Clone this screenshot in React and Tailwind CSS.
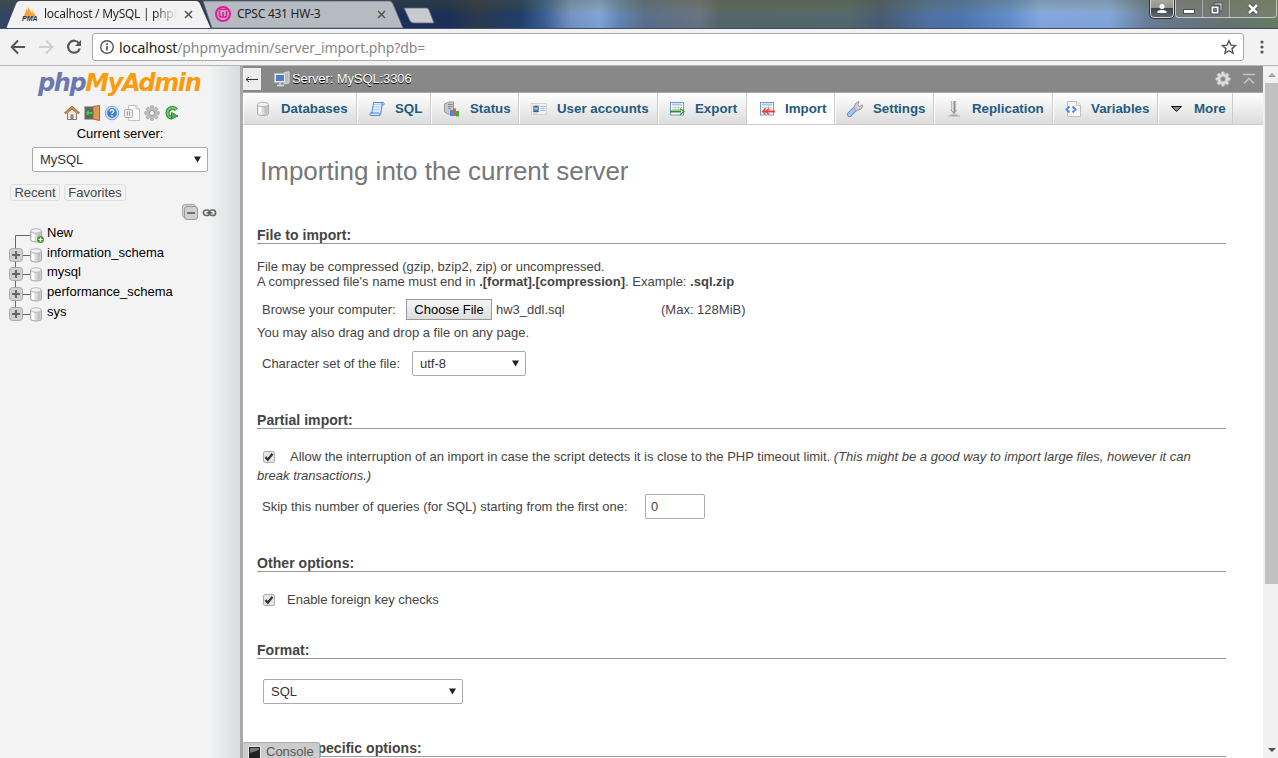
import React from "react";

const Svg = ({ w = 16, h = 16, className = "", children }) => (
  <svg width={w} height={h} viewBox={`0 0 ${w} ${h}`} className={"shrink-0 " + className} fill="none">
    {children}
  </svg>
);

const GearShape = ({ fill, stroke, hole }) => (
  <>
    {[0, 45, 90, 135].map((a) => (
      <rect key={a} x="6.4" y="0.7" width="3.2" height="14.6" rx="0.8" fill={fill} stroke={stroke} strokeWidth=".6" transform={`rotate(${a} 8 8)`} />
    ))}
    <circle cx="8" cy="8" r="5.3" fill={fill} />
    <circle cx="8" cy="8" r="2.6" fill={hole} stroke={stroke} />
  </>
);

const Cylinder = () => (
  <>
    <path d="M2.5 3.5v9c0 1.2 2.4 2 5.5 2s5.500-.8 5.500-2v-9" fill="#d9d9d9" stroke="#aaa" />
    <path d="M3.500 5v7.500c.8.6 1.800 1 3 1.100V6z" fill="#fff" />
    <path d="M9.500 6v7.600c1.500-.1 2.500-.5 3-1V5z" fill="#c2c2c2" />
    <ellipse cx="8" cy="3.500" rx="5.500" ry="2.200" fill="#f2f2f2" stroke="#b5b5b5" />
  </>
);

const DbIcon = () => <Svg><Cylinder /></Svg>;

const SqlIcon = () => (
  <Svg>
    <path d="M4.500 1.500h10c.8.6.8 2 0 2.500H13l-1.300 9.500c-.2.700-.7 1-1.200 1H1.500c-1-.5-1-2 0-2.500H3z" fill="#dceafb" stroke="#4f87d0" />
    <path d="M5 3.500h6M4.800 6h6.500M4.500 8.500h6" stroke="#b9d3f3" />
    <path d="M1.500 12h8.500c.6.8.4 2 .3 2.500M12.800 4V2" stroke="#4f87d0" />
  </Svg>
);

const StatusIcon = () => (
  <Svg w={17}>
    <path d="M1.500 3 6 1h4.500v12H5l-3.500-2z" fill="#c9c9c9" stroke="#999" />
    <path d="M5 3.500h4.500M5 5.500h4.500M5 7.500h3" stroke="#888" />
    <rect x="7" y="9" width="3" height="6" fill="#4a86e8" />
    <rect x="10" y="7.500" width="3" height="7.500" fill="#f0553a" />
    <rect x="13" y="10" width="3" height="5.500" fill="#3fae3f" />
  </Svg>
);

const UsersIcon = () => (
  <Svg>
    <rect x=".5" y="2.500" width="15" height="11" fill="#f3f3f3" stroke="#d2d2d2" />
    <rect x="2" y="4.500" width="6" height="6.500" fill="#5a93dd" />
    <circle cx="5" cy="7" r="1.600" fill="#f0b98a" />
    <path d="M2.500 11c0-2 5-2 5 0z" fill="#2c5ea8" />
    <path d="M3.400 6.400c0-2 3.200-2 3.200 0z" fill="#7a4a22" />
    <path d="M9.500 5.500h5M9.500 7.500h4M9.500 9.500h5" stroke="#9dbce2" />
    <path d="M2 12h5" stroke="#bbb" />
  </Svg>
);

const TableSheet = () => (
  <>
    <rect x="1.500" y="1.500" width="13" height="12.500" fill="#fff" stroke="#6f9ad3" />
    <path d="M3 3.500h10" stroke="#a9c6ea" strokeWidth="2" />
    <path d="M3 6.500h10M3 8.500h10M6 4v5.500M9.500 4v5.500" stroke="#b9c9b9" strokeWidth=".8" />
  </>
);

const ExportIcon = () => (
  <Svg>
    <TableSheet />
    <path d="M1 10.500h11" stroke="#2e8b2e" strokeWidth="2" />
    <path d="m11 7.500 4 3-4 3.200" stroke="#2e8b2e" strokeWidth="1.300" />
  </Svg>
);

const ImportIcon = () => (
  <Svg>
    <TableSheet />
    <path d="M4 10.500h12" stroke="#f03a30" strokeWidth="2" />
    <path d="m6.500 7.500-3 3 3 3M10 7.500l-3 3 3 3" stroke="#f03a30" strokeWidth="1.200" />
  </Svg>
);

const WrenchIcon = () => (
  <Svg>
    <path d="M2.500 13.500 8 8" stroke="#5585c8" strokeWidth="5" strokeLinecap="round" />
    <path d="M2.500 13.500 8 8" stroke="#a5c6f2" strokeWidth="3.200" strokeLinecap="round" />
    <path d="m7.500 5.500 1-3 2.500-1.800 1 .3-1.200 2.700 1.800 1.700L15.300 4l.4 1.200L14 8l-3 1-1.500.8L6.700 7z" fill="#d0d0d0" stroke="#8d8d8d" strokeWidth=".9" />
  </Svg>
);

const ReplicationIcon = () => (
  <Svg>
    <path d="M5.500 0v9.500M7.500 0v12M9.500 0v9.500" stroke="#bdbdbd" strokeWidth="1.300" />
    <path d="M8.500 0v12.500M5 9l3 3.500L10.500 9" stroke="#8f8f8f" />
    <path d="M2 15h12M4.500 14h7" stroke="#aaa" strokeWidth="1.200" />
  </Svg>
);

const VariablesIcon = () => (
  <Svg>
    <path d="M2.500.5H12L15.500 4v11.500h-13z" fill="#fafafa" stroke="#c0c0c0" />
    <path d="M11.500.5v4h4" stroke="#c8c8c8" fill="#eee" />
    <path d="M4.500 5.500 1.500 8.500l3 3M7.500 5.500l3 3-3 3" stroke="#4d8df0" strokeWidth="2" />
  </Svg>
);

const MoreIcon = () => (
  <Svg>
    <path d="M3.500 5.500h10l-5 5z" fill="#8a8a80" stroke="#111" />
  </Svg>
);

const tabs = [
  ["Databases", DbIcon, "w-[114px] pl-[12px]"],
  ["SQL", SqlIcon, "w-[74px] pl-[12px]"],
  ["Status", StatusIcon, "w-[88px] pl-[12px]"],
  ["User accounts", UsersIcon, "w-[139px] pl-[12px]"],
  ["Export", ExportIcon, "w-[89px] pl-[11px]"],
  ["Import", ImportIcon, "w-[88px] pl-[12px]"],
  ["Settings", WrenchIcon, "w-[99px] pl-[12px]"],
  ["Replication", ReplicationIcon, "w-[119px] pl-[12px]"],
  ["Variables", VariablesIcon, "w-[105px] pl-[12px]"],
  ["More", MoreIcon, "w-[75px] pl-[10px]"],
];

const Select = ({ children, className }) => (
  <div className={"flex h-[25px] items-center justify-between rounded-[2px] border border-[#aaa] bg-white pl-[7px] pr-[6px] text-[#333] " + className}>
    <span>{children}</span>
    <Svg w={7} h={7}><path d="M0 .5h7L3.500 6.500z" fill="#222" /></Svg>
  </div>
);

const Legend = ({ children, className }) => (
  <h3 className={"h-[17px] border-b border-[#999] text-[14px] font-bold leading-[16px] tracking-[0.06px] text-[#444] " + className}>{children}</h3>
);

const Check = ({ className = "" }) => (
  <span className={"inline-flex h-[12px] w-[12px] shrink-0 items-center justify-center rounded-[2px] border border-[#adadad] bg-[#e6e6e6] " + className}>
    <Svg w={10} h={10}><path d="m1.500 5 2.300 2.800L8.500 1.800" stroke="#333" strokeWidth="2.200" /></Svg>
  </span>
);

function TitleBar() {
  return (
    <div className="relative flex h-[29px] overflow-hidden border-b border-[#43506a] bg-[linear-gradient(180deg,rgba(80,90,60,.35)_0%,rgba(80,90,60,.2)_35%,rgba(40,80,150,.15)_50%,rgba(40,70,120,.2)_100%),linear-gradient(90deg,#33435c_0px,#2b3850_200px,#172a52_410px,#182b50_450px,#2b3443_475px,#1f3a64_520px,#3c6396_545px,#83a0ca_570px,#8fb4e4_600px,#6d8fb8_620px,#64748b_645px,#747a80_700px,#5d6b66_720px,#5c6c68_850px,#4d5e6e_880px,#5678a8_930px,#537cb4_960px,#6c99d8_1010px,#94b8ee_1040px,#93b6ea_1110px,#7689a0_1145px,#76808a_1170px,#707b6a_1230px,#73875c_1278px)]">
      <svg width="440" height="28" viewBox="0 0 440 28" className="absolute left-0 top-0">
        <path d="M203 1h186c2 0 3 1 4 3l10 24H212z" fill="#b6bbc2" stroke="#656d78" strokeWidth=".8" />
        <path d="M6 29 16 4c1-2 2-3 4-3h176c2 0 3 1 4 3l11 25z" fill="#f2f2f2" />
        <path d="M404 8h21c2 0 3 0 4 2l5 13h-20c-2 0-3-1-4-2z" fill="#c7cbd0" stroke="#5f6874" strokeWidth=".8" />
        <path d="m23 18 4-10 3 10zM28 18V7l7 11zM33 17l-1-7 5 8z" fill="#f7a23b" />
      </svg>
      <div className="relative flex h-[28px] w-[210px] shrink-0 items-center pl-[44px] font-['Noto_Sans'] text-[12px] text-[#222]">
        <span className="absolute left-[22px] top-[15px] font-['Liberation_Sans'] text-[7px] font-bold italic leading-[8px] text-[#223a6b]">PMA</span>
        <span className="w-[133px] overflow-hidden whitespace-nowrap bg-[linear-gradient(90deg,#222_110px,transparent_133px)] bg-clip-text text-[12px] tracking-[-0.27px] text-transparent">localhost / MySQL | phpMyAdmin</span>
        <Svg w={9} h={9} className="ml-[7px]"><path d="m1 1 7 7M8 1 1 8" stroke="#555" strokeWidth="1.600" /></Svg>
      </div>
      <div className="relative flex h-[28px] w-[190px] shrink-0 items-center pl-[5px] font-['Noto_Sans'] text-[12px] text-[#222]">
        <Svg>
          <circle cx="8" cy="8" r="7" stroke="#e6189b" strokeWidth="2" />
          <path d="M4.500 5v4.500c0 2 3.500 2 3.500 0V6v3.500c0 2 3.500 2 3.500 0V5" stroke="#e6189b" strokeWidth="1.700" />
          <path d="M4 3.500h8" stroke="#e6189b" strokeWidth="1.500" />
        </Svg>
        <span className="ml-[6px] w-[140px] tracking-[-0.25px]">CPSC 431 HW-3</span>
        <Svg w={9} h={9}><path d="m1 1 7 7M8 1 1 8" stroke="#555" strokeWidth="1.600" /></Svg>
      </div>
      <div className="relative ml-auto mr-[1px] flex h-[18px] shrink-0 gap-[1px]">
        <div className="flex w-[24px] items-center justify-center rounded-b-[4px] border border-t-0 border-[#d5d5d5] bg-[linear-gradient(180deg,#a8a79c_0%,#94938c_45%,#3f444b_50%,#606870_100%)] outline outline-1 outline-[#333]">
          <Svg w={12} h={12}><circle cx="6" cy="3.500" r="2.500" fill="#fff" /><path d="M1.500 10V8.500c1-2 8-2 9 0V10z" fill="#fff" /></Svg>
        </div>
        <div className="flex w-[102px] rounded-b-[4px] border border-t-0 border-[#c8c8c8] bg-[#808078]/50">
          <div className="flex w-[27px] items-center justify-center border-r border-[#aaa]">
            <Svg w={14} h={14}><rect x="1.500" y="7.500" width="11" height="4" fill="#fff" stroke="#4b4b58" /></Svg>
          </div>
          <div className="flex w-[27px] items-center justify-center border-r border-[#aaa]">
            <Svg w={13} h={13}><path d="M4 1h8v8h-2V3H4z" fill="#eee" stroke="#4b4b58" /><path d="M1 4h8v8H1z" fill="#fff" stroke="#4b4b58" /><rect x="3.700" y="6.700" width="2.600" height="2.600" fill="#999" stroke="#4b4b58" /></Svg>
          </div>
          <div className="flex flex-1 items-center justify-center">
            <Svg w={12} h={12}><path d="m2 2 8 8M10 2l-8 8" stroke="#4b4b58" strokeWidth="4.500" /><path d="m2 2 8 8M10 2l-8 8" stroke="#fff" strokeWidth="2.500" /></Svg>
          </div>
        </div>
      </div>
    </div>
  );
}

function Toolbar() {
  return (
    <div className="flex h-[37px] shrink-0 items-center border-b border-[#b5b5b5] bg-[#f2f2f2] pl-[10px]">
      <Svg><path d="M15 8H2M8 1.500 1.700 8 8 14.500" stroke="#555" strokeWidth="2" /></Svg>
      <Svg className="ml-[12px]"><path d="M1 8h13M8 1.500 14.300 8 8 14.500" stroke="#cfcfcf" strokeWidth="2" /></Svg>
      <Svg className="ml-[12px]"><path d="M13 4.300A6 6 0 1 0 13.800 9.500" stroke="#555" strokeWidth="2.200" /><path d="M15 1v6H9z" fill="#555" /></Svg>
      <div className="ml-[10px] flex h-[28px] w-[1152px] items-center rounded-[3px] border border-[#a9a9a9] bg-white pl-[6px] pr-[6px] font-['Noto_Sans'] text-[14px] text-[#888]">
        <Svg><circle cx="8" cy="8" r="6.300" stroke="#555" strokeWidth="1.400" /><path d="M8 7v4.500M8 4.200V6" stroke="#555" strokeWidth="1.700" /></Svg>
        <span className="ml-[4px] tracking-[-0.1px]"><span className="text-[#222]">localhost</span>/phpmyadmin/server_import.php?db=</span>
        <Svg className="ml-auto"><path d="m8 1.800 1.900 4.300 4.700.4-3.600 3.100 1.100 4.600L8 11.700l-4.100 2.500L5 9.600 1.400 6.500l4.700-.4z" stroke="#555" strokeWidth="1.400" /></Svg>
      </div>
      <Svg className="ml-[10px]"><g fill="#555"><circle cx="8" cy="3" r="1.600" /><circle cx="8" cy="8" r="1.600" /><circle cx="8" cy="13" r="1.600" /></g></Svg>
    </div>
  );
}

function TreeRow({ label, fresh, last, h }) {
  return (
    <div className={"flex " + h}>
      <Svg w={47} h={20}>
        {fresh ? (
          <path d="M15.500 20V11.500H31" stroke="#666" />
        ) : (
          <>
            <path d={last ? "M15.500 0v10M15.500 11.500H31" : "M15.500 0v20M15.500 11.500H31"} stroke="#666" />
            <rect x="9.500" y="4.500" width="13" height="13" rx="3" fill="#d0d0d0" stroke="#a8a8a8" />
            <path d="M12 11h8M16 7v8" stroke="#666" strokeWidth="2" />
          </>
        )}
        <g transform="translate(28 3.500)"><Cylinder /></g>
        {fresh && <><circle cx="40.500" cy="15.500" r="3.500" fill="#4a9c2d" /><path d="M38.500 15.500h4M40.500 13.500v4" stroke="#fff" strokeWidth="1.200" /></>}
      </Svg>
      <span className="leading-[18px] text-black">{label}</span>
    </div>
  );
}

function Sidebar() {
  return (
    <aside className="flex w-[240px] shrink-0 flex-col bg-[linear-gradient(90deg,#f3f3f3_0px,#f3f3f3_208px,#e3e5e7_226px,#d8dcde_240px)]">
      <div className="ml-[38px] mt-[3px] h-[32px] w-[180px] whitespace-nowrap font-['DejaVu_Sans'] text-[24px] font-bold italic leading-[28px] tracking-[-1.4px] text-[#f89c0e]">
        <span className="text-[#6c78af]">php</span>MyAdmin
      </div>
      <div className="ml-[64px] mt-[4px] flex gap-[4px]">
        <Svg><path d="M3.500 8v6.500h9V8L8 4z" fill="#f5ead8" stroke="#7a7a7a" /><path d="M.8 8.500 8 2l7.200 6.500" stroke="#a5652a" strokeWidth="2.200" /><path d="M1.500 8 8 2l6.500 6" stroke="#dd9f5c" strokeWidth=".8" /><rect x="6.500" y="9.500" width="3" height="5" fill="#888" /></Svg>
        <Svg><rect x=".5" y="1.500" width="9" height="13" fill="#666" /><path d="M9 1.500 15.500.5v15L9 14z" fill="#dc9a55" stroke="#a86a2c" /><path d="M1 8l4-4v2.500h4v3H5V12z" fill="#5bbb5b" stroke="#2b7a2b" strokeWidth=".8" /></Svg>
        <Svg><circle cx="8" cy="8" r="6.800" fill="#c9def6" stroke="#7fa8dc" /><circle cx="8" cy="8" r="4.900" fill="#3f7fce" /><path d="M6.200 6.500c0-2.400 3.600-2.200 3.600-.2 0 1.300-1.800 1.200-1.800 2.700M8 10v1.400" stroke="#fff" strokeWidth="1.400" /></Svg>
        <Svg><path d="M4.500.5h7.500l3.500 3.500v11.500h-11z" fill="#fafafa" stroke="#c0c0c0" /><path d="M12 .5V4h3.500" stroke="#c0c0c0" /><rect x=".5" y="4.500" width="8" height="8" rx="1.500" fill="#ececec" stroke="#b0b0b0" /><path d="M3.500 6.500v4M5.500 6.500v4" stroke="#999" /></Svg>
        <Svg><GearShape fill="#bdbdbd" stroke="#999" hole="#f0f0f0" /></Svg>
        <Svg><path d="M12.500 4.800C10 1.500 3.500 3 3.500 8c0 3 2.500 4.500 4.500 4.500" stroke="#2f8a2f" strokeWidth="4" /><path d="M12.500 4.800C10 1.500 3.500 3 3.500 8c0 3 2.500 4.500 4.500 4.500" stroke="#74c974" strokeWidth="2" /><path d="M7 8.500h6.500L10 15z" fill="#55b255" stroke="#2f8a2f" transform="rotate(-90 10 11)" /></Svg>
      </div>
      <div className="mt-[5px] h-[15px] text-center leading-[15px] text-black">Current server:</div>
      <Select className="ml-[32px] mt-[6px] w-[176px]">MySQL</Select>
      <div className="ml-[10px] mt-[12px] flex h-[17px] gap-[4px] leading-[15px] text-[#444]">
        <span className="w-[50px] rounded-[3px] border border-[#ddd] text-center">Recent</span>
        <span className="w-[62px] rounded-[3px] border border-[#ddd] text-center">Favorites</span>
      </div>
      <div className="ml-[182px] mt-[3px] flex h-[16px] gap-[4px]">
        <Svg><rect x=".5" y=".5" width="13" height="13" rx="2.500" fill="#d5d5d5" stroke="#a5a5a5" /><rect x="2.500" y="2.500" width="13" height="13" rx="2.500" fill="#d0d0d0" stroke="#999" /><path d="M5 9h8" stroke="#666" strokeWidth="1.800" /></Svg>
        <Svg w={15}><rect x="1.500" y="6" width="6" height="5.500" rx="2.500" stroke="#666" strokeWidth="1.700" /><rect x="7.500" y="6" width="6" height="5.500" rx="2.500" stroke="#666" strokeWidth="1.700" /><path d="M4.500 8.800h6" stroke="#555" strokeWidth="1.400" /></Svg>
      </div>
      <div className="mt-[4px]">
        <TreeRow label="New" fresh h="h-[20px]" />
        <TreeRow label="information_schema" h="h-[19px]" />
        <TreeRow label="mysql" h="h-[20px]" />
        <TreeRow label="performance_schema" h="h-[20px]" />
        <TreeRow label="sys" last h="h-[20px]" />
      </div>
    </aside>
  );
}

function Main() {
  return (
    <main className="relative flex w-[1020px] shrink-0 flex-col overflow-hidden bg-white">
      <div className="flex h-[26px] shrink-0 items-center bg-[#888] text-white">
        <div className="flex h-[22px] w-[18px] items-center justify-center bg-[#eee]">
          <Svg w={14} h={9}><path d="M1 4.500h12M4 2 1 4.500 4 7" stroke="#333" /></Svg>
        </div>
        <Svg className="ml-[13px]">
          <path d="M10 1.500 15 0.800v11l-5 1z" fill="#bbb" stroke="#ddd" />
          <rect x=".5" y="2.500" width="11" height="9" fill="#e9e9e9" stroke="#bbb" />
          <rect x="2" y="4" width="8" height="6" fill="#4f7fc2" />
          <path d="M6 12v2M3 14.500h7" stroke="#ddd" strokeWidth="1.500" />
        </Svg>
        <span className="ml-[2px] tracking-[-0.1px] [text-shadow:0_1px_0_#000]">Server: MySQL:3306</span>
        <Svg className="ml-auto"><GearShape fill="#ddd" stroke="#bbb" hole="#888" /></Svg>
        <Svg w={14} h={12} className="ml-[11px] mr-[7px]"><path d="M1 1.500h12M2 10.500l5-5 5 5" stroke="#c4c4c4" strokeWidth="1.600" /></Svg>
      </div>
      <nav className="flex h-[33px] shrink-0 border-b border-t border-b-[#ccc] border-t-[#aaa] bg-[linear-gradient(180deg,#fff,#dcdcdc)]">
        {tabs.map(([label, Icon, cls]) => (
          <div key={label} className={"flex h-full shrink-0 items-center gap-[10px] whitespace-nowrap border-r border-[#ccc] text-[13.300px] font-bold text-[#235a81] shadow-[inset_1px_0_0_#fff] " + cls + (label === "Import" ? " relative h-[32px] bg-white" : "")}>
            <Icon />
            <span>{label}</span>
          </div>
        ))}
      </nav>
      <div className="flex w-[983px] flex-col pl-[14px] text-[#444]">
        <h2 className="ml-[3px] mt-[30px] h-[32px] text-[26px] leading-[32px] text-[#777]">Importing into the current server</h2>

        <Legend className="mt-[40px]">File to import:</Legend>
        <p className="mt-[15px] leading-[15px]">File may be compressed (gzip, bzip2, zip) or uncompressed.<br />A compressed file's name must end in <b>.[format].[compression]</b>. Example: <b>.sql.zip</b></p>
        <div className="mt-[10px] flex h-[21px] items-center pl-[5px]">
          <span className="w-[144px]">Browse your computer:</span>
          <span className="flex h-[21px] w-[86px] items-center justify-center border border-[#999] bg-[linear-gradient(180deg,#f6f6f6,#ddd)] text-black">Choose File</span>
          <span className="ml-[4px] w-[165px]">hw3_ddl.sql</span>
          <span>(Max: 128MiB)</span>
        </div>
        <p className="mt-[5px] h-[15px] leading-[15px]">You may also drag and drop a file on any page.</p>
        <div className="mt-[11px] flex h-[25px] items-center pl-[5px]">
          <span className="w-[150px]">Character set of the file:</span>
          <Select className="w-[114px]">utf-8</Select>
        </div>

        <Legend className="mt-[36px]">Partial import:</Legend>
        <p className="mt-[18px] h-[38px] leading-[19px]"><Check className="ml-[6px] mr-[15px] align-[-1px]" />Allow the interruption of an import in case the script detects it is close to the PHP timeout limit. <i>(This might be a good way to import large files, however it can<br />break transactions.)</i></p>
        <div className="mt-[9px] flex h-[25px] items-center pl-[5px]">
          <span className="w-[383px]">Skip this number of queries (for SQL) starting from the first one:</span>
          <span className="flex h-[25px] w-[60px] items-center rounded-[2px] border border-[#aaa] pl-[5px]">0</span>
        </div>

        <Legend className="mt-[36px]">Other options:</Legend>
        <div className="mt-[19px] flex h-[18px] items-center pl-[6px]">
          <Check />
          <span className="ml-[12px]">Enable foreign key checks</span>
        </div>

        <Legend className="mt-[33px]">Format:</Legend>
        <Select className="ml-[6px] mt-[20px] w-[200px]">SQL</Select>
        <Legend className="mt-[36px]">Format-specific options:</Legend>
      </div>
      <div className="absolute bottom-0 left-0 flex h-[16px] w-[77px] items-center rounded-tr-[3px] border-r border-t border-[#aaa] bg-[#ccc] pl-[5px] pt-[2px] text-[#555]">
        <Svg w={13} h={13} className="mt-[2px]"><rect x=".5" y=".5" width="12" height="12" fill="#222" stroke="#eee" /><path d="M2 2h9v2L2 7z" fill="#777" /></Svg>
        <span className="ml-[5px]">Console</span>
      </div>
    </main>
  );
}

export default function App() {
  return (
    <div className="flex h-[758px] w-[1278px] flex-col overflow-hidden bg-white font-['Liberation_Sans',Arial,sans-serif] text-[13px]">
      <TitleBar />
      <Toolbar />
      <div className="flex min-h-0 flex-1">
        <Sidebar />
        <div className="w-[3px] shrink-0 bg-[#aaa]" />
        <Main />
        <div className="flex w-[15px] shrink-0 flex-col items-center justify-between bg-[#f1f1f1] pl-[2px]">
          <div className="flex h-[17px] items-center"><Svg w={8} h={4}><path d="M0 4h8L4 0z" fill="#a3a3a3" /></Svg></div>
          <div className="mb-auto h-[501px] w-full bg-[#c1c1c1]" />
          <div className="flex h-[17px] items-center"><Svg w={8} h={4}><path d="M0 0h8L4 4z" fill="#505050" /></Svg></div>
        </div>
      </div>
    </div>
  );
}
